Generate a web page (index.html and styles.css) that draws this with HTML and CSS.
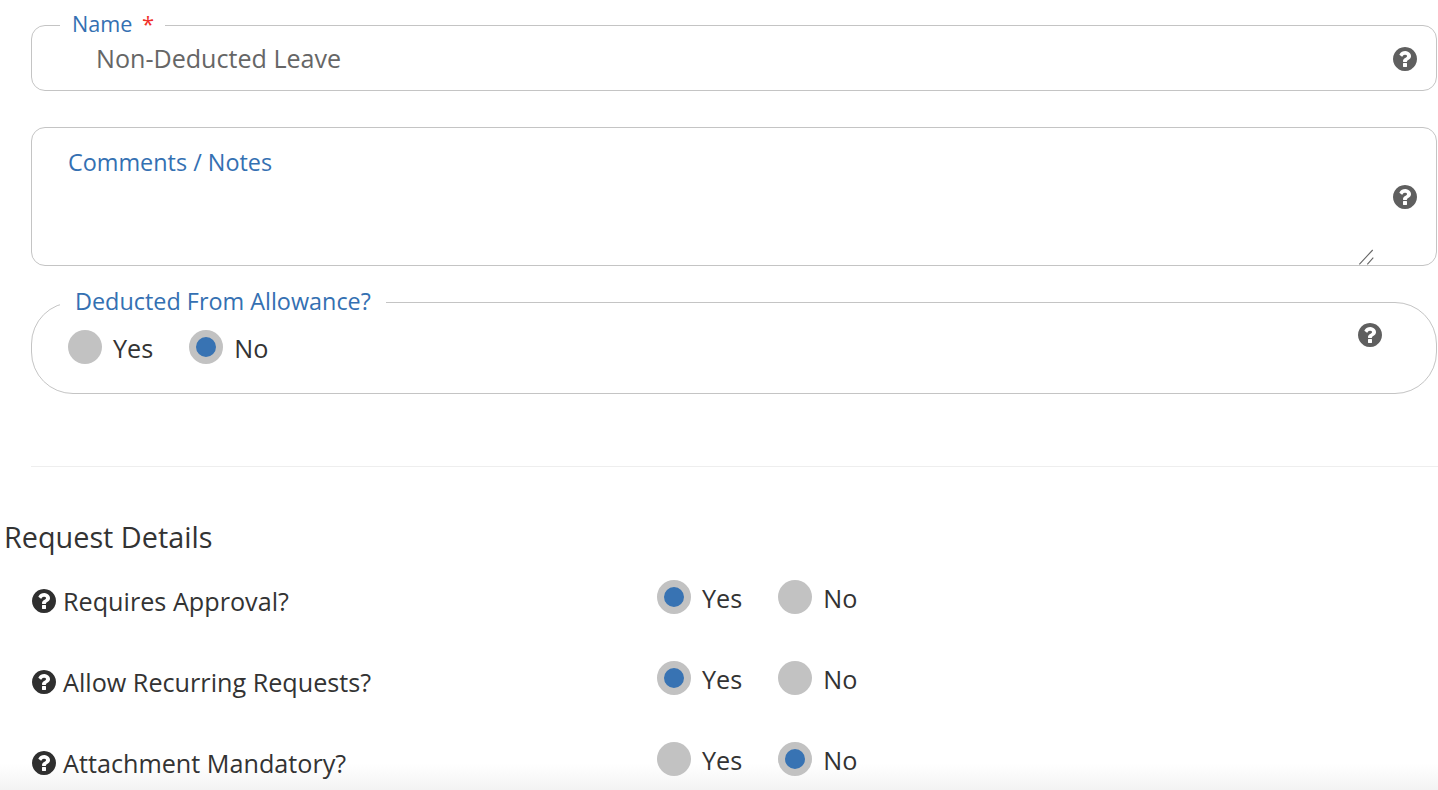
FILE: index.html
```html
<!DOCTYPE html>
<html lang="en">
<head>
<meta charset="utf-8">
<title>Leave Type</title>
<link rel="stylesheet" href="styles.css">
</head>
<body>
<svg class="defs" width="0" height="0" aria-hidden="true"><symbol id="help" viewBox="128 128 1536 1536"><path d="M1024 1376v-192q0-14-9-23t-23-9h-192q-14 0-23 9t-9 23v192q0 14 9 23t23 9h192q14 0 23-9t9-23zm256-672q0-88-55.5-163t-138.5-116-170-41q-243 0-371 213-15 24 8 42l132 100q7 6 19 6 16 0 25-12 53-68 86-92 34-24 86-24 48 0 85.5 26t37.5 59q0 38-20 61t-68 45q-63 28-115.5 86.5t-52.5 125.5v36q0 14 9 23t23 9h192q14 0 23-9t9-23q0-19 21.5-49.5t54.5-49.5q32-18 49-28.5t46-35 44.5-48 28-60.5 12.5-81zm384 192q0 209-103 385.5t-279.5 279.5-385.5 103-385.5-103-279.5-279.5-103-385.5 103-385.5 279.5-279.5 385.5-103 385.5 103 279.5 279.5 103 385.5z"/></symbol></svg>
<div class="fade"></div>
<main class="page">
  <fieldset class="field field-name">
    <legend class="legend legend-name">Name <span class="req">*</span></legend>
    <input class="name-input" type="text" value="Non-Deducted Leave">
    <svg class="help help-field"><use href="#help"/></svg>
  </fieldset>

  <div class="field-notes">
    <label class="notes-label" for="notes">Comments / Notes</label>
    <textarea class="notes-input" id="notes"></textarea>
    <svg class="grip" viewBox="0 0 16 17" aria-hidden="true"><path d="M1.3 16.3 14.7 2M9.3 16.3l6-6.6"/></svg>
    <svg class="help help-notes"><use href="#help"/></svg>
  </div>

  <fieldset class="field field-radio">
    <legend class="legend legend-radio">Deducted From Allowance?</legend>
    <div class="radios">
      <label class="radio"><input type="radio" name="deducted"><span>Yes</span></label>
      <label class="radio"><input type="radio" name="deducted" checked><span>No</span></label>
    </div>
    <svg class="help help-radio"><use href="#help"/></svg>
  </fieldset>

  <hr class="rule">

  <h2 class="section-title">Request Details</h2>

  <div class="row">
    <div class="row-label"><svg class="help help-row"><use href="#help"/></svg><span>Requires Approval?</span></div>
    <div class="radios">
      <label class="radio"><input type="radio" name="approval" checked><span>Yes</span></label>
      <label class="radio"><input type="radio" name="approval"><span>No</span></label>
    </div>
  </div>
  <div class="row">
    <div class="row-label"><svg class="help help-row"><use href="#help"/></svg><span>Allow Recurring Requests?</span></div>
    <div class="radios">
      <label class="radio"><input type="radio" name="recurring" checked><span>Yes</span></label>
      <label class="radio"><input type="radio" name="recurring"><span>No</span></label>
    </div>
  </div>
  <div class="row">
    <div class="row-label"><svg class="help help-row"><use href="#help"/></svg><span>Attachment Mandatory?</span></div>
    <div class="radios">
      <label class="radio"><input type="radio" name="attachment"><span>Yes</span></label>
      <label class="radio"><input type="radio" name="attachment" checked><span>No</span></label>
    </div>
  </div>
</main>
</body>
</html>
```
FILE: styles.css
```css
html, body {
  margin: 0;
  height: 790px;
  overflow: hidden;
  background: #fff;
  font-family: "Open Sans", sans-serif;
  color: #333;
}
.defs { position: absolute; }
.page {
  position: relative;
  display: flex;
  flex-direction: column;
  padding: 9px 1px 0 31px;
}
.field {
  position: relative;
  margin: 0;
  padding: 0;
  min-width: 0;
  border: 1px solid #c4c4c4;
}
.legend {
  color: #3470b2;
  font-size: 21.6px;
  line-height: 28px;
}
.field-name {
  height: 82px;
  box-sizing: border-box;
  border-radius: 14px;
}
.legend-name { margin-left: 28px; padding: 1px 11px 3px 12px; }
.req { color: #f0302a; margin-left: 4px; font-size: 22px; line-height: 1; }
.name-input {
  display: block;
  box-sizing: border-box;
  width: 1290px;
  height: 37px;
  margin: -2px 0 0 64px;
  padding: 0;
  border: 0;
  outline: 0;
  background: transparent;
  color: #666;
  font: 25.1px "Open Sans", sans-serif;
}
.help {
  width: 24px;
  height: 24px;
  fill: #5f5f5f;
  flex: none;
}
.help-field { position: absolute; right: 19px; top: 6px; }
.field-notes {
  position: relative;
  box-sizing: border-box;
  height: 139px;
  margin-top: 36px;
  border: 1px solid #c4c4c4;
  border-radius: 14px;
}
.notes-label {
  position: absolute;
  left: 36px;
  top: 20px;
  color: #3470b2;
  font-size: 23.4px;
  line-height: 28px;
}
.notes-input {
  display: block;
  box-sizing: border-box;
  width: 1342px;
  height: 137px;
  padding: 0;
  border: 0;
  outline: 0;
  background: transparent;
  border-radius: 14px;
  resize: none;
}
.grip {
  position: absolute;
  right: 62px;
  bottom: 0;
  width: 16px;
  height: 17px;
  fill: none;
  stroke: #666;
  stroke-width: 1.1;
}
.help-notes { position: absolute; right: 19px; top: 57px; }
.field-radio {
  height: 107px;
  box-sizing: border-box;
  margin-top: 21px;
  border-radius: 42px;
}
.legend-radio { margin-left: 28px; padding: 0 15px 2px; font-size: 23.4px; }
.help-radio { position: absolute; right: 54px; top: 6px; }
.radios { display: flex; gap: 36px; }
.field-radio .radios { margin: 11px 0 0 36px; }
.radio {
  display: flex;
  align-items: center;
  gap: 11px;
  font-size: 25.2px;
  line-height: 34px;
}
.radio span { padding-top: 3px; }
.radio input {
  appearance: none;
  box-sizing: border-box;
  width: 34px;
  height: 34px;
  margin: 0;
  border-radius: 50%;
  background: #c2c2c2;
}
.radio input:checked {
  border: 7px solid #c2c2c2;
  background: #3873b3;
}
.rule {
  align-self: stretch;
  margin: 72px -1px 0 0;
  border: 0;
  border-top: 1px solid #eee;
}
.section-title {
  margin: 50px 0 21px -27px;
  font-size: 28.8px;
  font-weight: 400;
  line-height: 40px;
}
.row {
  display: flex;
  height: 81px;
  align-items: flex-start;
}
.row-label {
  display: flex;
  align-items: center;
  gap: 7px;
  width: 626px;
  height: 34px;
  margin-top: 6px;
  font-size: 25.2px;
  color: #333;
}
.help-row { fill: #2f2f2f; margin-left: 1px; }
.fade {
  position: absolute;
  left: 0;
  right: 0;
  bottom: 0;
  height: 26px;
  background: linear-gradient(rgba(240,240,240,0), rgba(240,240,240,.8));
  pointer-events: none;
}
```
